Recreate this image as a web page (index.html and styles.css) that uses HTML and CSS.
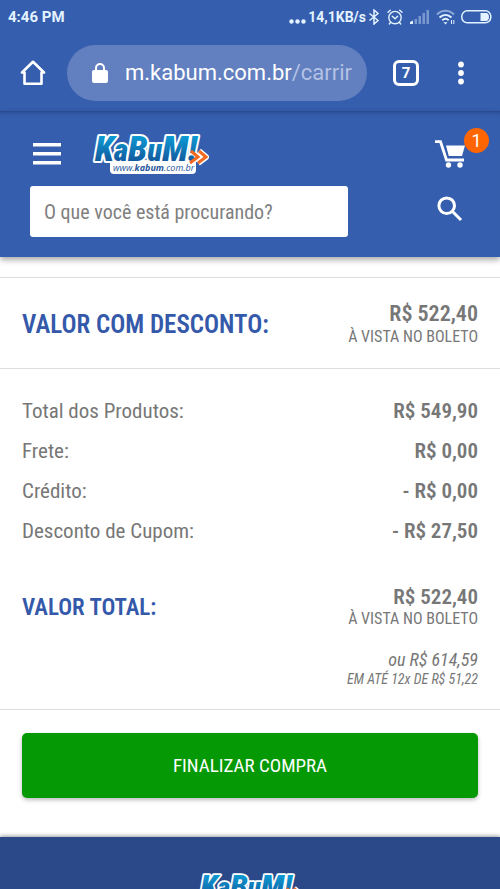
FILE: index.html
```html
<!DOCTYPE html>
<html lang="pt-BR">
<head>
<meta charset="utf-8">
<meta name="viewport" content="width=device-width, initial-scale=1">
<title>Carrinho - KaBuM!</title>
<link rel="stylesheet" href="styles.css">
</head>
<body>
<div class="status">
  <span class="clock">4:46 PM</span>
  <div class="indicators">
    <svg class="dots" width="17" height="16" viewBox="0 0 17 16" fill="currentColor" aria-hidden="true"><circle cx="2.500" cy="12.500" r="2.200"/><circle cx="8.500" cy="12.500" r="2.200"/><circle cx="14.500" cy="12.500" r="2.200"/></svg>
    <span class="speed">14,1KB/s</span>
    <svg width="12" height="16" viewBox="0 0 12 16" fill="none" stroke="currentColor" stroke-width="1.500" aria-hidden="true"><path d="M1.500 4.500 10 11.500 6 15V1l4 3.500L1.500 11.500"/></svg>
    <svg class="alarm" width="16" height="16" viewBox="0 0 16 16" fill="none" stroke="currentColor" stroke-width="1.400" stroke-linecap="round" aria-hidden="true"><circle cx="8" cy="8.600" r="6.200"/><path d="M5.300 7.300 8 9.700l2.700-2.400M1 3.300 3.300 1.200M15 3.300 12.700 1.200M3.500 13.500 2.300 15M12.500 13.500l1.200 1.500"/></svg>
    <svg class="signal" width="20" height="14" viewBox="0 0 20 14" fill="currentColor" aria-hidden="true"><path d="M0 14v-2l3-1.500V14z"/><path opacity=".4" d="M4.500 9H7v5H4.500zM8.500 6H11v8H8.500zM12.500 3H15v11h-2.500zM16.500 0H19v14h-2.500z"/></svg>
    <svg class="wifi" width="20" height="16" viewBox="0 0 20 16" fill="none" stroke="currentColor" stroke-width="1.900" aria-hidden="true"><path opacity=".5" d="M1 5.500C6 .5 13 .5 18 5.500"/><path d="M3.500 8.500c3.700-3.500 8.300-3.500 12 0M6.300 11.300c2-1.800 4.400-1.800 6.400 0"/><path d="M7.500 13.300h4l-2 2.200z" fill="currentColor" stroke="none"/><path stroke-width="1" d="M15.500 11v4M17.800 11v4"/></svg>
    <svg class="battery" width="31" height="14" viewBox="0 0 31 14" aria-hidden="true"><rect x=".8" y=".8" width="29" height="12" rx="5.500" fill="none" stroke="currentColor" stroke-width="1.500"/><path d="M19.500 3H25c4 0 4 8 0 8h-5.500z" fill="currentColor"/></svg>
  </div>
</div>
<div class="browser">
  <button class="icon" aria-label="Página inicial"><svg width="26" height="26" viewBox="0 0 26 26" fill="none" stroke="currentColor" stroke-width="2.600" stroke-linejoin="round" stroke-linecap="round"><path d="M2 12.500 13 1.800l11 10.700M2 12.500h2.500v11.200h17V12.500H24"/></svg></button>
  <a class="address" href="#">
    <svg width="16" height="20" viewBox="0 0 16 20" aria-hidden="true"><rect y="7" width="16" height="13" rx="2" fill="currentColor"/><path d="M4 8V5a4 4 0 0 1 8 0v3" fill="none" stroke="currentColor" stroke-width="2"/></svg>
    <span class="url">m.kabum.com.br<span class="path">/carrir</span></span>
  </a>
  <button class="tabs" aria-label="Abas abertas">7</button>
  <button class="icon" aria-label="Mais opções"><svg width="6" height="24" viewBox="0 0 6 24" fill="currentColor"><circle cx="3" cy="3.500" r="2.900"/><circle cx="3" cy="12" r="2.900"/><circle cx="3" cy="20.500" r="2.900"/></svg></button>
</div>
<header class="site">
  <div class="top">
    <button class="icon" aria-label="Menu"><svg width="28" height="22" viewBox="0 0 28 22" fill="currentColor"><path d="M0 0h28v3.500H0zM0 9h28v3.500H0zM0 18h28v3.500H0z"/></svg></button>
    <a class="logo" href="#" aria-label="KaBuM!">
      <svg width="118" height="42" viewBox="0 0 118 42">
        <defs>
          <linearGradient id="ink" x1="0" y1="0" x2="0" y2="1"><stop offset="0.2" stop-color="#0d98d2"/><stop offset="0.8" stop-color="#12589c"/></linearGradient>
          <g id="mark">
            <rect x="19" y="27" width="86" height="14" rx="4" fill="#fff"/>
            <path d="m100 18 7 6-8 6M108 18l7 6-8 6" fill="none" stroke="#fff" stroke-width="6" stroke-linejoin="round"/>
            <text class="word" x="4" y="28">K<tspan font-size="31">a</tspan>B<tspan font-size="31">u</tspan>M!</text>
            <path d="m100 18 7 6-8 6M108 18l7 6-8 6" fill="none" stroke="#f26a21" stroke-width="3"/>
            <text class="site-name" x="22" y="38">www.<tspan font-weight="700">kabum</tspan>.com.br</text>
          </g>
        </defs>
        <use href="#mark"/>
      </svg>
    </a>
    <button class="cart" aria-label="Carrinho, 1 item"><svg width="31" height="28" viewBox="0 0 31 28" fill="currentColor"><path d="M11 5.500h19L27 16H13.800z"/><path d="M0 1.700h5.500L11.500 20H29" fill="none" stroke="currentColor" stroke-width="2.800"/><circle cx="13.500" cy="25" r="2.700"/><circle cx="25" cy="25" r="2.700"/></svg><span class="badge">1</span></button>
  </div>
  <form class="search">
    <input type="text" aria-label="Busca" placeholder="O que você está procurando?">
    <button class="icon" type="button" aria-label="Buscar"><svg width="26" height="26" viewBox="0 0 26 26" fill="none" stroke="currentColor" stroke-width="3"><circle cx="9.700" cy="9.700" r="7.800"/><path d="m15.500 15.500 8.500 8.500"/></svg></button>
  </form>
</header>
<main>
  <section class="discount">
    <h2>VALOR COM DESCONTO:</h2>
    <div class="price"><strong>R$ 522,40</strong><span class="note">À VISTA NO BOLETO</span></div>
  </section>
  <section class="summary">
    <dl>
      <div><dt>Total dos Produtos:</dt><dd>R$ 549,90</dd></div>
      <div><dt>Frete:</dt><dd>R$ 0,00</dd></div>
      <div><dt>Crédito:</dt><dd>- R$ 0,00</dd></div>
      <div><dt>Desconto de Cupom:</dt><dd>- R$ 27,50</dd></div>
    </dl>
    <div class="total">
      <h3>VALOR TOTAL:</h3>
      <div class="price"><strong>R$ 522,40</strong><span class="note">À VISTA NO BOLETO</span></div>
    </div>
    <div class="installments"><span>ou R$ 614,59</span><small>EM ATÉ 12x DE R$ 51,22</small></div>
  </section>
  <div class="checkout"><button>FINALIZAR COMPRA</button></div>
</main>
<footer><svg width="106" height="38" viewBox="0 0 118 42" role="img" aria-label="KaBuM!"><use href="#mark"/></svg></footer>
</body>
</html>
```
FILE: styles.css
```css
* { box-sizing: border-box; }
body {
  margin: 0;
  height: 100vh;
  overflow: hidden;
  display: flex;
  flex-direction: column;
  background: #fff;
  color: #777;
  font-family: "Roboto Condensed", "Liberation Sans Narrow", Roboto, sans-serif;
}
button { border: 0; padding: 0; background: none; color: inherit; font-family: inherit; }
svg { display: block; flex: none; }
h2, h3, dl, dd { margin: 0; }
a { color: inherit; text-decoration: none; }

.status, .browser {
  flex: none;
  display: flex;
  align-items: center;
  background: #355eae;
  color: #fff;
  font-family: Roboto, sans-serif;
}
.status { height: 34px; padding: 0 8px; justify-content: space-between; color: #e3f3ff; font-weight: 700; }
.clock { font-size: 15px; }
.indicators { display: flex; align-items: center; gap: 2px; }
.speed { font-size: 14px; }
.alarm { margin-left: 5px; }
.signal { margin: 0 4px 0 5px; }
.battery { margin-left: 3px; }

.browser { height: 77px; padding: 0 36px 0 20px; }
.address {
  flex: 1;
  min-width: 0;
  height: 56px;
  margin: 0 26px 0 21px;
  padding: 0 10px 0 25px;
  display: flex;
  align-items: center;
  gap: 17px;
  border-radius: 28px;
  background: #627fbf;
}
.url { overflow: hidden; white-space: nowrap; font-size: 22px; }
.path { color: #b3c2e4; }
.tabs { width: 26px; height: 26px; margin-right: 39px; border: 3px solid #fff; border-radius: 6px; font-size: 15px; font-weight: 700; }

.site {
  position: relative;
  flex: none;
  padding: 19px 34px 20px 30px;
  background: #355eae;
  color: #fff;
  box-shadow: inset 0 5px 4px -4px #24407e, 0 3px 6px #0005;
}
.top { display: flex; align-items: center; height: 48px; padding-left: 3px; }
.logo { margin: 0 auto 0 30px; }
.word {
  font: italic 900 35px "Roboto Condensed", Roboto, sans-serif;
  fill: url(#ink);
  stroke: #fff;
  stroke-width: 4px;
  stroke-linejoin: round;
  paint-order: stroke;
}
.site-name { font: italic 9px "Open Sans", sans-serif; fill: #27579c; }
.cart { position: relative; }
.badge {
  position: absolute;
  top: -12px;
  right: -23px;
  width: 25px;
  height: 25px;
  border-radius: 50%;
  background: #ff6500;
  font: 18px/25px Roboto, sans-serif;
}
.search { display: flex; justify-content: space-between; gap: 24px; margin-top: 8px; padding-right: 3px; }
.search input {
  flex: 0 1 318px;
  min-width: 0;
  height: 51px;
  padding: 0 14px;
  border: 0;
  border-radius: 3px;
  background: #fff;
  font: inherit;
  font-size: 20px;
}
.search input::placeholder { color: #808080; opacity: 1; }
.search .icon { height: 45px; }

main { flex: none; padding-top: 20px; }
.discount, .summary { border-top: 1px solid #ddd; padding: 0 22px; }
.discount { height: 91px; padding-top: 3px; display: flex; align-items: center; justify-content: space-between; }
h2, h3 { color: #3559aa; font-weight: 600; }
h2 { font-size: 25px; }
h3 { font-size: 23px; }
.price { display: flex; flex-direction: column; text-align: right; }
.price strong { font-size: 22px; line-height: 24px; font-weight: 600; }
.note { font-size: 16px; line-height: 20px; }
.discount .note { line-height: 22px; }
.summary { padding-top: 22px; padding-bottom: 21px; border-bottom: 1px solid #ddd; }
dl div { display: flex; justify-content: space-between; font-size: 21px; line-height: 40px; }
dd { font-weight: 600; }
.total { display: flex; align-items: center; justify-content: space-between; margin-top: 34px; }
.total strong { font-size: 21px; }
.installments { display: flex; flex-direction: column; margin-top: 21px; text-align: right; font-style: italic; font-size: 18px; line-height: 20px; }
.installments small { font-size: 14px; line-height: 18px; }
.checkout { padding: 23px 22px 39px; }
.checkout button {
  width: 100%;
  height: 65px;
  border-radius: 5px;
  background: #059a05;
  color: #fff;
  font-size: 19px;
  box-shadow: 0 2px 4px #0004;
}
footer {
  flex: 1;
  min-height: 0;
  overflow: hidden;
  display: flex;
  justify-content: center;
  padding-top: 35px;
  background: #2b4888;
  box-shadow: 0 -1px 4px #0006;
}
```
